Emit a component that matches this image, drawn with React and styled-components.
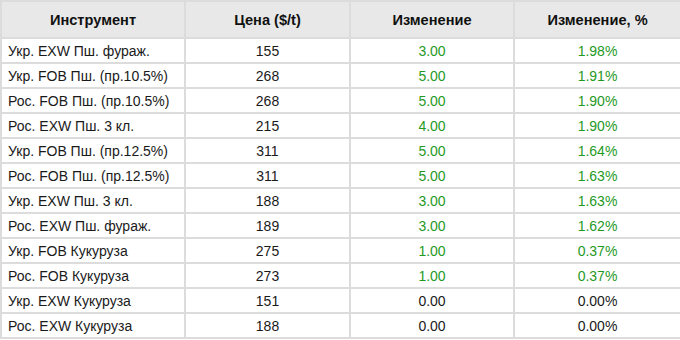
import styled, { createGlobalStyle } from "styled-components"

const Global = createGlobalStyle`
  body {
    margin: 0;
    background: #fff;
    font-family: "Liberation Sans", Arial, sans-serif;
  }
`

const Table = styled.table`
  width: 680px;
  border-collapse: collapse;
  border: 2px solid #dcdcdc;
  font-size: 14px;
  color: #1a1a1a;
  table-layout: fixed;
`

const Head = styled.th`
  height: 37px;
  padding: 1px 6px 0;
  background: #e8e8e8;
  border: 2px solid #dcdcdc;
  font-size: 14.6px;
  font-weight: bold;
  color: #111;
  text-align: center;
  box-sizing: border-box;
`

const Cell = styled.td`
  height: 22px;
  padding: 1px 6px 0;
  border: 2px solid #dcdcdc;
  text-align: ${p => (p.$left ? "left" : "center")};
  color: ${p => (p.$up ? "#1f9a1f" : "#1a1a1a")};
  white-space: nowrap;
`

const rows = [
  ["Укр. EXW Пш. фураж.", "155", "3.00", "1.98%"],
  ["Укр. FOB Пш. (пр.10.5%)", "268", "5.00", "1.91%"],
  ["Рос. FOB Пш. (пр.10.5%)", "268", "5.00", "1.90%"],
  ["Рос. EXW Пш. 3 кл.", "215", "4.00", "1.90%"],
  ["Укр. FOB Пш. (пр.12.5%)", "311", "5.00", "1.64%"],
  ["Рос. FOB Пш. (пр.12.5%)", "311", "5.00", "1.63%"],
  ["Укр. EXW Пш. 3 кл.", "188", "3.00", "1.63%"],
  ["Рос. EXW Пш. фураж.", "189", "3.00", "1.62%"],
  ["Укр. FOB Кукуруза", "275", "1.00", "0.37%"],
  ["Рос. FOB Кукуруза", "273", "1.00", "0.37%"],
  ["Укр. EXW Кукуруза", "151", "0.00", "0.00%"],
  ["Рос. EXW Кукуруза", "188", "0.00", "0.00%"],
]

const App = () => {
  return (
    <>
      <Global />
      <Table>
        <colgroup>
          <col style={{ width: 184 }} />
          <col style={{ width: 165 }} />
          <col style={{ width: 164 }} />
          <col style={{ width: 167 }} />
        </colgroup>
        <thead>
          <tr>
            <Head>Инструмент</Head>
            <Head>Цена ($/t)</Head>
            <Head>Изменение</Head>
            <Head>Изменение, %</Head>
          </tr>
        </thead>
        <tbody>
          {rows.map(([name, price, diff, pct]) => {
            const up = parseFloat(diff) > 0
            return (
              <tr key={name}>
                <Cell $left>{name}</Cell>
                <Cell>{price}</Cell>
                <Cell $up={up}>{diff}</Cell>
                <Cell $up={up}>{pct}</Cell>
              </tr>
            )
          })}
        </tbody>
      </Table>
    </>
  )
}

export default App
